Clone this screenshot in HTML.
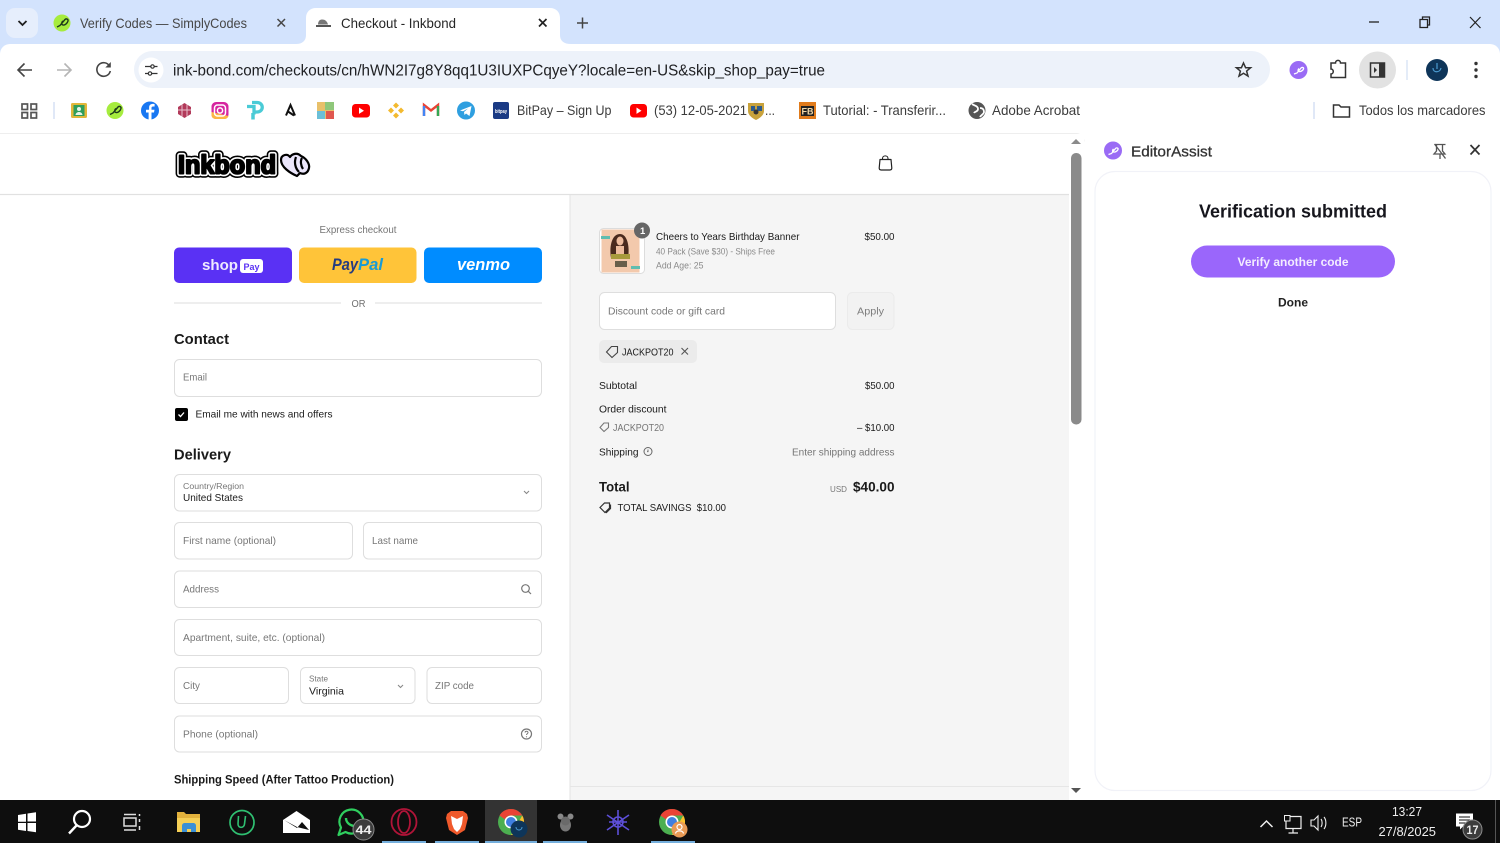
<!DOCTYPE html>
<html lang="en"><head><meta charset="utf-8"><title>Checkout - Inkbond</title>
<style>
html,body{margin:0;padding:0;background:#fff;width:1500px;height:843px;overflow:hidden}
svg{display:block;filter:blur(.3px)}
text{font-family:"Liberation Sans",sans-serif;white-space:pre}
.ph{fill:#777;font-size:10.5px}
.dk{fill:#1a1a1a;font-size:10.5px}
.gr{fill:#757575;font-size:10.5px}
.inp{fill:#fff;stroke:#dedede;stroke-width:1}
</style></head><body>
<svg width="1500" height="843" viewBox="0 0 1500 843" xmlns="http://www.w3.org/2000/svg">
<!-- chrome frame -->
<rect width="1500" height="843" fill="#d3e3fd"/>
<rect x="0" y="44" width="1500" height="120" rx="10" fill="#fff"/>
<rect x="0" y="133" width="1500" height="670" fill="#fff"/>
<!-- tab switcher -->
<rect x="6" y="8" width="32" height="30" rx="9" fill="#e6eefc"/>
<path d="M18.5 21l4 4 4-4" fill="none" stroke="#1f1f1f" stroke-width="1.800"/>
<!-- tab 1 -->
<circle cx="62" cy="23" r="8.500" fill="#a6ec3e"/>
<path d="M57 27l3-1.500 5-6c1-1.200 3.500-.5 3 1.500s-3 4.500-5 4-1.500-3 0-4" fill="none" stroke="#1d3a1a" stroke-width="1.400"/>
<text x="80" y="28" font-size="14" fill="#474747" textLength="167" lengthAdjust="spacingAndGlyphs">Verify Codes — SimplyCodes</text>
<path d="M277.500 19l7.500 7.500M285 19l-7.500 7.500" stroke="#474747" stroke-width="1.500"/>
<!-- active tab -->
<path d="M296 44c6 0 10-3 10-9V18c0-6 4-10 10-10h234c6 0 10 4 10 10v17c0 6 4 9 11 9z" fill="#fff"/>
<path d="M316 27h15v-2h-15z" fill="#555"/><path d="M318 24.500c0-3 1.500-5 4-5 3 0 5 1.500 6 5z" fill="#777"/>
<text x="341" y="28" font-size="14" fill="#262626" textLength="115" lengthAdjust="spacingAndGlyphs">Checkout - Inkbond</text>
<path d="M539 19l7.500 7.500M546.500 19l-7.500 7.500" stroke="#222" stroke-width="1.700"/>
<path d="M582.500 17.500v11M577 23h11" stroke="#444" stroke-width="1.500"/>
<!-- window controls -->
<path d="M1369 22h10" stroke="#222" stroke-width="1.300"/>
<path d="M1420 19.500h7.500v8h-7.500z M1422.500 19.500v-2.500h7v8h-2" fill="none" stroke="#222" stroke-width="1.300"/>
<path d="M1470 17l10.500 11M1480.500 17L1470 28" stroke="#222" stroke-width="1.200"/>
<!-- toolbar -->
<path d="M32 70H18M24.500 63.500l-6.500 6.500 6.500 6.500" fill="none" stroke="#454545" stroke-width="1.600"/>
<path d="M57 70h14M64.500 63.500l6.500 6.500-6.500 6.500" fill="none" stroke="#b5b5b5" stroke-width="1.600"/>
<path d="M109.500 66a6.800 6.800 0 1 0 .8 5" fill="none" stroke="#454545" stroke-width="1.600"/><path d="M110.800 62v5.500h-5.500z" fill="#454545"/>
<rect x="134" y="51" width="1136" height="37" rx="18.500" fill="#edf2fa"/>
<circle cx="151" cy="70" r="12.500" fill="#fff"/>
<path d="M145 66.500h6M154.500 66.500h3M145 73.500h3M151.500 73.500h6" stroke="#333" stroke-width="1.300"/>
<circle cx="152.500" cy="66.500" r="1.700" fill="none" stroke="#333" stroke-width="1.200"/><circle cx="150" cy="73.500" r="1.700" fill="none" stroke="#333" stroke-width="1.200"/>
<text x="173" y="75.500" font-size="15.500" fill="#202124" textLength="652" lengthAdjust="spacingAndGlyphs">ink-bond.com/checkouts/cn/hWN2I7g8Y8qq1U3IUXPCqyeY?locale=en-US&amp;skip_shop_pay=true</text>
<path d="M1243.500 63l2.100 4.700h5l-4 3.400 1.400 5-4.500-2.800-4.500 2.800 1.400-5-4-3.400h5z" fill="none" stroke="#333" stroke-width="1.500"/>
<circle cx="1298.500" cy="70" r="9" fill="#9a6bf5"/>
<path d="M1294 74l3-1 4-5c1-1.200 3-.5 2.500 1s-3 3-4.500 2.500-1-2 0-3" fill="none" stroke="#fff" stroke-width="1.300"/>
<path d="M1331 63h4.500c0-3.500 5-3.500 5 0h5v14.500h-14.500v-3.500c3 0 3-5 0-5z" fill="none" stroke="#333" stroke-width="1.500"/>
<circle cx="1377.500" cy="70" r="18.500" fill="#e2e2e2"/>
<rect x="1370.500" y="63" width="14" height="14" fill="none" stroke="#333" stroke-width="1.500"/><rect x="1379" y="63" width="5.500" height="14" fill="#333"/><path d="M1374 67l3 3-3 3z" fill="#333"/>
<path d="M1407 60v20" stroke="#dbe5f5" stroke-width="1.500"/>
<circle cx="1437" cy="70" r="11" fill="#0e3559"/><path d="M1433 68c0 5 7 5 8 0M1437 63v6" fill="none" stroke="#4a9ad0" stroke-width="1.200"/>
<circle cx="1476" cy="63.500" r="1.700" fill="#333"/><circle cx="1476" cy="70" r="1.700" fill="#333"/><circle cx="1476" cy="76.500" r="1.700" fill="#333"/>
<!-- bookmarks -->
<g fill="none" stroke="#555" stroke-width="1.700"><rect x="22" y="104" width="5.500" height="5.500"/><rect x="31" y="104" width="5.500" height="5.500"/><rect x="22" y="112.500" width="5.500" height="5.500"/><rect x="31" y="112.500" width="5.500" height="5.500"/></g>
<path d="M54 102v17" stroke="#d5e1f4" stroke-width="1.500"/>
<rect x="71" y="103" width="16" height="15" rx="1.500" fill="#e2b73a"/><rect x="73.500" y="105" width="11" height="11" fill="#2f9e5b"/><circle cx="79" cy="109" r="2" fill="#e6f4e6"/><path d="M75.500 115c.5-4 6.500-4 7 0z" fill="#e6f4e6"/>
<circle cx="115" cy="110.500" r="8.500" fill="#a6ec3e"/><path d="M110 114.500l3-1.500 5-6c1-1.200 3.500-.5 3 1.500s-3 4.500-5 4-1.500-3 0-4" fill="none" stroke="#1d3a1a" stroke-width="1.400"/>
<circle cx="150" cy="110.500" r="9" fill="#1877f2"/><path d="M151.500 119.500v-7h2.500l.5-2.800h-3V108c0-1 .5-1.500 1.500-1.500h1.600V104c-3.300-.5-5.500.5-5.500 3.500v2.200H146v2.800h2.600v7z" fill="#fff"/>
<path d="M178 107l6.500-4 6.500 4v7l-6.500 4-6.500-4z" fill="#b23a5a"/><path d="M182 104.500v12M187 104.500v12M178 110l13 0" stroke="#e8c0cc" stroke-width="1"/>
<rect x="211.500" y="102" width="17" height="17" rx="4.500" fill="#d6249f"/><path d="M211.500 112v3c0 2.500 2 4 4.500 4h8.500c2 0 3.500-1.500 4-3z" fill="#fdb644"/>
<rect x="214.500" y="105" width="11" height="11" rx="3" fill="none" stroke="#fff" stroke-width="1.500"/><circle cx="220" cy="110.500" r="2.600" fill="none" stroke="#fff" stroke-width="1.500"/>
<path d="M247 106.500h7v8M252 102.500h5c7 0 7 9.500 0 9.500h-3" fill="none" stroke="#4acbd6" stroke-width="3.300"/><path d="M253 113v6.500" stroke="#4acbd6" stroke-width="3.500"/>
<path d="M286 115.500l4.500-10.500 4.500 10.500M288 111.500l6 4" fill="none" stroke="#111" stroke-width="2"/>
<rect x="317" y="102" width="17" height="17" fill="#e8c06a"/><rect x="317" y="111" width="8" height="8" fill="#6bbfd8"/><rect x="326" y="111" width="8" height="8" fill="#e0574f"/><rect x="325" y="102" width="9" height="8" fill="#8fc77a"/>
<rect x="352" y="104" width="18" height="13.500" rx="3.500" fill="#f00"/><path d="M359 107.500l5 3.200-5 3.200z" fill="#fff"/>
<g fill="#f3ba2f"><path d="M396 102.500l3 3-3 3-3-3z"/><path d="M396 112.500l3 3-3 3-3-3z"/><path d="M391 107.500l3 3-3 3-3-3z"/><path d="M401 107.500l3 3-3 3-3-3z"/></g>
<path d="M424 116v-11l7 5.500 7-5.500v11" fill="none" stroke="#ea4335" stroke-width="2.400"/><path d="M424 116v-10" stroke="#4285f4" stroke-width="2.400"/><path d="M438 116v-10" stroke="#34a853" stroke-width="2.400"/>
<circle cx="466" cy="110.500" r="9" fill="#2f9fe0"/><path d="M460 110.500l11.500-4.500-2 10-3.500-2.500-1.500 1.500-.5-3 4-3.500-5 2.800z" fill="#fff"/>
<rect x="493" y="102" width="16" height="17" rx="2" fill="#1a3a84"/><text x="495" y="113" font-size="5" fill="#fff" font-weight="bold" textLength="12" lengthAdjust="spacingAndGlyphs">bitpay</text>
<text x="517" y="115" font-size="14" fill="#3c3c3c" textLength="94.500" lengthAdjust="spacingAndGlyphs">BitPay – Sign Up</text>
<rect x="630" y="104" width="17" height="13.500" rx="3.500" fill="#f00"/><path d="M636.500 107.500l5 3.200-5 3.200z" fill="#fff"/>
<text x="654" y="115" font-size="14" fill="#3c3c3c" textLength="93" lengthAdjust="spacingAndGlyphs">(53) 12-05-2021</text>
<path d="M748 103h16v8c0 4-4 7-8 9-4-2-8-5-8-9z" fill="#c8a23c"/><path d="M751 106h4v5h-4zM757 106h5v5h-5z" fill="#2c5a8c"/><circle cx="756" cy="112" r="2.500" fill="#333"/>
<text x="765" y="115" font-size="14" fill="#3c3c3c" textLength="10" lengthAdjust="spacingAndGlyphs">...</text>
<rect x="799" y="102" width="17" height="17" fill="#e07b1c"/><rect x="801" y="106" width="13" height="10" fill="#222"/><text x="801.500" y="114.500" font-size="9" font-weight="bold" fill="#f4d9a8" textLength="12" lengthAdjust="spacingAndGlyphs">FB</text>
<text x="823" y="115" font-size="14" fill="#3c3c3c" textLength="123" lengthAdjust="spacingAndGlyphs">Tutorial: - Transferir...</text>
<circle cx="977" cy="110.500" r="8.500" fill="#555"/><path d="M972 104c3 2 6 2 6 5s-3 2-4 4M980 108c3 0 4 2 4 4s-3 3-4 5" fill="none" stroke="#fff" stroke-width="1.800"/>
<text x="992" y="115" font-size="14" fill="#3c3c3c" textLength="88" lengthAdjust="spacingAndGlyphs">Adobe Acrobat</text>
<path d="M1314 102v17" stroke="#d5e1f4" stroke-width="1.500"/>
<path d="M1333.500 105h5.500l2 2h8.500v10h-16z" fill="none" stroke="#333" stroke-width="1.500"/>
<text x="1359" y="115" font-size="14" fill="#3c3c3c" textLength="126.500" lengthAdjust="spacingAndGlyphs">Todos los marcadores</text>

<!-- page content -->
<rect x="570" y="194" width="499" height="606" fill="#f5f5f5"/>
<path d="M570 194v606" stroke="#e3e3e3"/>
<path d="M0 194.500h1069" stroke="#e1e1e1" stroke-width="1.200"/>
<path d="M570 786.500h499" stroke="#e6e6e6"/>
<path d="M0 133.500h1076a8 8 0 0 1 8 8" fill="none" stroke="#eee"/>
<!-- logo -->
<g font-weight="bold" font-size="26">
<text x="178" y="173.500" textLength="98" lengthAdjust="spacingAndGlyphs" fill="#000" stroke="#000" stroke-width="8.500" stroke-linejoin="round" stroke-linecap="round">Inkbond</text>
<text x="178" y="173.500" textLength="98" lengthAdjust="spacingAndGlyphs" fill="#fff" stroke="#fff" stroke-width="5.200" stroke-linejoin="round" stroke-linecap="round">Inkbond</text>
<text x="178" y="173.500" textLength="98" lengthAdjust="spacingAndGlyphs" fill="#000" stroke="#000" stroke-width="2" stroke-linejoin="round">Inkbond</text>
</g>
<path d="M281 160c0-5 6-7 9-3 2-3 7-5 11-1 5 2 9 8 8 12-1 5-5 7-9 5l-3 3c-7-3-16-9-16-16z" fill="#ebe6fb" stroke="#000" stroke-width="2.200" stroke-linejoin="round"/>
<path d="M296 157c-2 5-1 11 3 15M302 158c-2 3-1 8 1 11" fill="none" stroke="#000" stroke-width="2.200"/>
<!-- bag -->
<path d="M880 159.500h11l.8 8.500c0 1.500-.8 2-2 2h-8.600c-1.200 0-2-.5-2-2z" fill="none" stroke="#222" stroke-width="1.200" stroke-linejoin="round"/><path d="M882.500 159.500v-1c0-3.500 5.500-3.500 5.500 0v1" fill="none" stroke="#222" stroke-width="1.100"/>

<!-- express -->
<text x="319.500" y="233" class="gr" font-size="10.500" textLength="77" lengthAdjust="spacingAndGlyphs">Express checkout</text>
<rect x="174" y="247.500" width="118" height="35.500" rx="5" fill="#5a31f4"/>
<text x="202" y="270" font-size="15" font-weight="bold" fill="#efeaff" textLength="36" lengthAdjust="spacingAndGlyphs">shop</text>
<rect x="240" y="259" width="23" height="14" rx="3" fill="#fff"/><text x="243.500" y="270" font-size="9.500" font-weight="bold" fill="#5a31f4" textLength="16" lengthAdjust="spacingAndGlyphs">Pay</text>
<rect x="299" y="247.500" width="117.500" height="35.500" rx="5" fill="#ffc439"/>
<text x="332" y="270" font-size="16.500" font-weight="bold" font-style="italic" fill="#253b80" textLength="26" lengthAdjust="spacingAndGlyphs">Pay</text>
<text x="358" y="270" font-size="16.500" font-weight="bold" font-style="italic" fill="#179bd7" textLength="25" lengthAdjust="spacingAndGlyphs">Pal</text>
<rect x="424" y="247.500" width="118" height="35.500" rx="5" fill="#008cff"/>
<text x="457" y="270" font-size="16.500" font-weight="bold" font-style="italic" fill="#fff" textLength="53" lengthAdjust="spacingAndGlyphs">venmo</text>
<path d="M174 303h167M375 303h167" stroke="#e3e3e3" stroke-width="1.300"/>
<text x="351.500" y="307" font-size="10.500" fill="#707070" textLength="14" lengthAdjust="spacingAndGlyphs">OR</text>

<!-- contact -->
<text x="174" y="344" font-size="15" font-weight="bold" fill="#1a1a1a" textLength="55" lengthAdjust="spacingAndGlyphs">Contact</text>
<rect class="inp" x="174.500" y="359.500" width="367" height="37" rx="5"/>
<text x="183" y="380.500" class="ph" textLength="24" lengthAdjust="spacingAndGlyphs">Email</text>
<rect x="175" y="408" width="13" height="13" rx="2" fill="#000"/><path d="M178.500 414.500l2 2 3.500-4" fill="none" stroke="#fff" stroke-width="1.300"/>
<text x="195.500" y="417.500" class="dk" textLength="137" lengthAdjust="spacingAndGlyphs">Email me with news and offers</text>

<!-- delivery -->
<text x="174" y="459.500" font-size="15" font-weight="bold" fill="#1a1a1a" textLength="57" lengthAdjust="spacingAndGlyphs">Delivery</text>
<rect class="inp" x="174.500" y="474.500" width="367" height="36.500" rx="5"/>
<text x="183" y="489" font-size="8.500" fill="#777" textLength="61" lengthAdjust="spacingAndGlyphs">Country/Region</text>
<text x="183" y="501" class="dk" textLength="60" lengthAdjust="spacingAndGlyphs">United States</text>
<path d="M524 491l2.500 2.500 2.500-2.500" fill="none" stroke="#888" stroke-width="1.100"/>
<rect class="inp" x="174.500" y="522.500" width="178" height="36.500" rx="5"/>
<text x="183" y="544" class="ph" textLength="93" lengthAdjust="spacingAndGlyphs">First name (optional)</text>
<rect class="inp" x="363.500" y="522.500" width="178" height="36.500" rx="5"/>
<text x="372" y="544" class="ph" textLength="46" lengthAdjust="spacingAndGlyphs">Last name</text>
<rect class="inp" x="174.500" y="571" width="367" height="36.500" rx="5"/>
<text x="183" y="592.500" class="ph" textLength="36" lengthAdjust="spacingAndGlyphs">Address</text>
<circle cx="525.500" cy="588.500" r="3.800" fill="none" stroke="#777" stroke-width="1.200"/><path d="M528.300 591.300l2.700 2.700" stroke="#777" stroke-width="1.200"/>
<rect class="inp" x="174.500" y="619.500" width="367" height="36" rx="5"/>
<text x="183" y="641" class="ph" textLength="142" lengthAdjust="spacingAndGlyphs">Apartment, suite, etc. (optional)</text>
<rect class="inp" x="174.500" y="667.500" width="114" height="36" rx="5"/>
<text x="183" y="689" class="ph" textLength="17" lengthAdjust="spacingAndGlyphs">City</text>
<rect class="inp" x="300.500" y="667.500" width="114.500" height="36" rx="5"/>
<text x="309" y="681.500" font-size="8.500" fill="#777" textLength="19" lengthAdjust="spacingAndGlyphs">State</text>
<text x="309" y="694.500" class="dk" textLength="35" lengthAdjust="spacingAndGlyphs">Virginia</text>
<path d="M398 685l2.500 2.500 2.500-2.500" fill="none" stroke="#888" stroke-width="1.100"/>
<rect class="inp" x="427" y="667.500" width="114.500" height="36" rx="5"/>
<text x="435" y="689" class="ph" textLength="39" lengthAdjust="spacingAndGlyphs">ZIP code</text>
<rect class="inp" x="174.500" y="716" width="367" height="36" rx="5"/>
<text x="183" y="737.500" class="ph" textLength="75" lengthAdjust="spacingAndGlyphs">Phone (optional)</text>
<circle cx="526.500" cy="734" r="5" fill="none" stroke="#777" stroke-width="1.200"/><path d="M525 732.500c.3-1.800 3.200-1.500 3 .2-.1 1-1.500 1.200-1.500 2.300" fill="none" stroke="#777" stroke-width="1"/><circle cx="526.500" cy="736.800" r=".6" fill="#777"/>
<text x="174" y="783.500" font-size="12" font-weight="bold" fill="#1a1a1a" textLength="220" lengthAdjust="spacingAndGlyphs">Shipping Speed (After Tattoo Production)</text>

<!-- summary -->
<rect x="599.500" y="228.500" width="45" height="45" rx="4" fill="#fff" stroke="#dcdcdc"/>
<rect x="601.500" y="229.500" width="38" height="43" fill="#f3c9ac"/>
<path d="M611 258c-2-12 1-24 9-24 7 0 10 12 8 24z" fill="#4a2a1e"/>
<ellipse cx="620" cy="241" rx="3.500" ry="4.500" fill="#eebc9e"/><rect x="616" y="246" width="8" height="8" fill="#eebc9e"/>
<rect x="611" y="254" width="19" height="5" fill="#a89a3c"/><rect x="615" y="261" width="12" height="6" fill="#3a3a2a" opacity=".75"/>
<rect x="601" y="236" width="9" height="3" fill="#5fbdb0"/><rect x="631" y="266" width="9" height="3" fill="#5fbdb0"/>
<circle cx="642" cy="230.500" r="8" fill="#666"/><text x="640" y="234" font-size="9.500" font-weight="bold" fill="#fff">1</text>
<text x="656" y="240" class="dk" textLength="143.500" lengthAdjust="spacingAndGlyphs">Cheers to Years Birthday Banner</text>
<text x="656" y="254.500" font-size="9" fill="#8a8a8a" textLength="119" lengthAdjust="spacingAndGlyphs">40 Pack (Save $30) - Ships Free</text>
<text x="656" y="268.500" font-size="9" fill="#8a8a8a" textLength="47.500" lengthAdjust="spacingAndGlyphs">Add Age: 25</text>
<text x="864.500" y="240" class="dk" textLength="30" lengthAdjust="spacingAndGlyphs">$50.00</text>
<rect x="599.500" y="292.500" width="236" height="37" rx="5" fill="#fff" stroke="#dedede"/>
<text x="608" y="314.500" class="ph" textLength="117" lengthAdjust="spacingAndGlyphs">Discount code or gift card</text>
<rect x="847.500" y="292.500" width="46.500" height="37" rx="5" fill="#f2f2f2" stroke="#ebebeb"/>
<text x="857" y="314.500" font-size="10.500" fill="#7d7d7d" textLength="27" lengthAdjust="spacingAndGlyphs">Apply</text>
<rect x="599" y="340" width="98" height="23" rx="5" fill="#ebebeb"/>
<path d="M606.500 352l5-5.500h6v6l-5.500 5z" fill="none" stroke="#444" stroke-width="1.100"/>
<text x="622" y="355.500" class="dk" textLength="51.500" lengthAdjust="spacingAndGlyphs">JACKPOT20</text>
<path d="M681.500 348l6.500 6.500M688 348l-6.500 6.500" stroke="#555" stroke-width="1.100"/>
<text x="599" y="389" class="dk" textLength="38" lengthAdjust="spacingAndGlyphs">Subtotal</text>
<text x="865" y="389" class="dk" textLength="29.500" lengthAdjust="spacingAndGlyphs">$50.00</text>
<text x="599" y="412.500" class="dk" textLength="67.500" lengthAdjust="spacingAndGlyphs">Order discount</text>
<path d="M600 427.500l4-4.500h4.500v4.500l-4.500 4z" fill="none" stroke="#777" stroke-width="1.100"/>
<text x="613" y="431" class="gr" textLength="51" lengthAdjust="spacingAndGlyphs">JACKPOT20</text>
<text x="857" y="431" class="dk" textLength="37.500" lengthAdjust="spacingAndGlyphs">– $10.00</text>
<text x="599" y="455.500" class="dk" textLength="39.500" lengthAdjust="spacingAndGlyphs">Shipping</text>
<circle cx="648" cy="451.500" r="4" fill="none" stroke="#666" stroke-width="1"/><path d="M648 449.500v2.200h-1" fill="none" stroke="#666" stroke-width=".9"/>
<text x="792" y="455.500" class="gr" textLength="102.500" lengthAdjust="spacingAndGlyphs">Enter shipping address</text>
<text x="599" y="491.500" font-size="14" font-weight="bold" fill="#1a1a1a" textLength="30.500" lengthAdjust="spacingAndGlyphs">Total</text>
<text x="830" y="492" font-size="8.500" fill="#777" textLength="17" lengthAdjust="spacingAndGlyphs">USD</text>
<text x="853" y="491.500" font-size="14" font-weight="bold" fill="#1a1a1a" textLength="41.500" lengthAdjust="spacingAndGlyphs">$40.00</text>
<path d="M600 507.500l4.500-4.500h5v5l-4.500 4.500zM610.500 504.500v4l-4.500 4.500" fill="none" stroke="#333" stroke-width="1.200"/>
<text x="617.500" y="511" class="dk" textLength="108.500" lengthAdjust="spacingAndGlyphs">TOTAL SAVINGS  $10.00</text>

<!-- scrollbar -->
<rect x="1069" y="134" width="15" height="666" fill="#fff"/>
<path d="M1076 139l5 5h-10z" fill="#8a8a8a"/>
<rect x="1071" y="153" width="10.500" height="271.500" rx="5" fill="#8a8a8a"/>
<path d="M1076 793l5-5h-10z" fill="#555"/>

<!-- side panel -->
<circle cx="1113" cy="150.500" r="9" fill="#9a6bf5"/><path d="M1108.500 154.500l3-1 4-5c1-1.200 3-.5 2.500 1s-3 3-4.500 2.500-1-2 0-3" fill="none" stroke="#fff" stroke-width="1.300"/>
<text x="1131" y="156.500" font-size="15" fill="#333" stroke="#333" stroke-width=".3" textLength="81" lengthAdjust="spacingAndGlyphs">EditorAssist</text>
<path d="M1434.500 144.500h11M1436.500 145v6l-2.500 3h11l-2.500-3v-6M1440 154v5M1434.500 144l11 14.500" fill="none" stroke="#555" stroke-width="1.300"/>
<path d="M1470.500 145l9 9.500M1479.500 145l-9 9.500" stroke="#333" stroke-width="1.700"/>
<rect x="1095" y="171.500" width="396" height="619" rx="20" fill="#fff" stroke="#f1f2f8" stroke-width="1.200"/>
<text x="1199" y="217.500" font-size="18" font-weight="bold" fill="#16161d" textLength="188" lengthAdjust="spacingAndGlyphs">Verification submitted</text>
<rect x="1191" y="245.500" width="204" height="32" rx="16" fill="#9a66fb"/>
<text x="1237.500" y="266" font-size="12" font-weight="bold" fill="#f3edff" textLength="111" lengthAdjust="spacingAndGlyphs">Verify another code</text>
<text x="1278" y="306.500" font-size="12" font-weight="bold" fill="#222" textLength="30" lengthAdjust="spacingAndGlyphs">Done</text>

<!-- taskbar -->
<rect x="0" y="800" width="1500" height="43" fill="#0e0e0e"/>
<rect x="485" y="800" width="52" height="43" fill="#333"/>
<g fill="#74aedc"><rect x="382" y="841" width="44" height="2"/><rect x="435" y="841" width="44" height="2"/><rect x="485" y="841" width="52" height="2"/><rect x="543" y="841" width="44" height="2"/><rect x="651" y="841" width="44" height="2"/></g>
<path d="M18 815l8-1.200v8h-8zM27.500 813.500l8.500-1.300v9.300h-8.500zM18 823h8v8l-8-1.200zM27.500 823h8.500v9.300l-8.500-1.300z" fill="#fff"/>
<circle cx="82" cy="819" r="8" fill="none" stroke="#fff" stroke-width="2.200"/><path d="M76.500 825.500l-7.500 8" stroke="#fff" stroke-width="2.400"/>
<g fill="none" stroke="#ddd" stroke-width="1.500"><rect x="124" y="818" width="12" height="8"/><path d="M124 814.500h12M124 830h12M139.500 814v2M139.500 819v3M139.500 826v4"/></g>
<path d="M177 819v-7h7l2 2h14v5z" fill="#e2b13c"/><path d="M177 818h23v14h-23z" fill="#f5cf56"/><path d="M182 832v-6c0-2 1-3 3-3h8c2 0 3 1 3 3v6h-5v-3h-4v3z" fill="#3a8fd6"/>
<circle cx="242" cy="822.500" r="12" fill="none" stroke="#2fbf71" stroke-width="1.700"/>
<path d="M238.500 816l-.5 8c0 4.500 6 4.500 6.500 0l1-8" fill="none" stroke="#2fbf71" stroke-width="1.600"/>
<path d="M283 820l13.500-9 13.500 9v13h-27z" fill="#fff"/><path d="M284 820l13 8 5-6 7 8-12-3-13-7z" fill="#0e0e0e"/>
<path d="M338.500 835l2.500-7.500a12 12 0 1 1 4.500 4.500z" fill="none" stroke="#2fcf5f" stroke-width="2.200" stroke-linejoin="round"/>
<path d="M346 818c0 4 3 7 8 8" fill="none" stroke="#2fcf5f" stroke-width="2.400"/>
<circle cx="363.500" cy="829.500" r="10.500" fill="#3c3c3c" stroke="#8a8a8a"/>
<text x="355.500" y="834" font-size="12" font-weight="bold" fill="#eee" textLength="16" lengthAdjust="spacingAndGlyphs">44</text>
<ellipse cx="404" cy="822" rx="12.500" ry="13" fill="none" stroke="#b01438" stroke-width="1.800"/><ellipse cx="404" cy="822" rx="6" ry="11" fill="none" stroke="#b01438" stroke-width="1.800"/>
<path d="M447 814l4-3h12l4 3 1 4-3 12-8 5-8-5-3-12z" fill="#f0592b"/><path d="M451 816l6 3 6-3-1 8-2 5-3 3-3-3-2-5z" fill="#fff"/>
<circle cx="511" cy="822" r="13" fill="#4caf50"/><path d="M511 809a13 13 0 0 1 11.300 6.500H511a6.500 6.500 0 0 0-6 4l-5.500-4a13 13 0 0 1 11.500-6.500z" fill="#ea4335"/><path d="M522.300 815.500a13 13 0 0 1-11.300 19.500l5.500-9.500z" fill="#fbc02d"/><circle cx="511" cy="822" r="6.500" fill="#fff"/><circle cx="511" cy="822" r="5" fill="#3f7fe0"/>
<circle cx="519" cy="829" r="8.500" fill="#0e3559"/><path d="M516 827c0 4 6 4 6 0" fill="none" stroke="#4a9ad0"/>
<ellipse cx="565.500" cy="825" rx="5.500" ry="6.500" fill="#777"/><circle cx="560.500" cy="816.500" r="3" fill="#888"/><circle cx="570.500" cy="816.500" r="3" fill="#888"/><circle cx="565.500" cy="821" r="4.500" fill="#6a6a6a"/>
<g fill="none" stroke="#5d4fd8" stroke-width="1.600"><path d="M618 810v25M607 815l22 15M629 815l-22 15M609 822h18"/><circle cx="618" cy="822" r="5"/></g>
<circle cx="672" cy="822" r="13" fill="#4caf50"/><path d="M672 809a13 13 0 0 1 11.300 6.500H672a6.500 6.500 0 0 0-6 4l-5.500-4a13 13 0 0 1 11.500-6.500z" fill="#ea4335"/><path d="M683.300 815.500a13 13 0 0 1-11.300 19.500l5.500-9.500z" fill="#fbc02d"/><circle cx="672" cy="822" r="6.500" fill="#fff"/><circle cx="672" cy="822" r="5" fill="#3f7fe0"/>
<circle cx="679.500" cy="829.500" r="8" fill="#e89a55"/><circle cx="679.500" cy="827" r="2.500" fill="none" stroke="#fff" stroke-width="1.200"/><path d="M675.500 833.500c.5-3.500 7.500-3.500 8 0" fill="none" stroke="#fff" stroke-width="1.200"/>
<!-- tray -->
<path d="M1260.500 827l6-6 6 6" fill="none" stroke="#eee" stroke-width="1.500"/>
<path d="M1286 816.500h15v12h-15zM1293 828.500v4M1288.500 833h9.500" fill="none" stroke="#eee" stroke-width="1.200"/><rect x="1284.500" y="815.500" width="5.500" height="5.500" fill="#0e0e0e" stroke="#eee"/>
<path d="M1311 820h3l4-4v14l-4-4h-3zM1321 819c1.500 2 1.500 6 0 8M1324 817c2.500 3 2.500 9 0 12" fill="none" stroke="#eee" stroke-width="1.100"/>
<text x="1342" y="826.500" font-size="13" fill="#eee" textLength="20" lengthAdjust="spacingAndGlyphs">ESP</text>
<text x="1392" y="816" font-size="13" fill="#eee" textLength="30" lengthAdjust="spacingAndGlyphs">13:27</text>
<text x="1378.500" y="836" font-size="13" fill="#eee" textLength="57.500" lengthAdjust="spacingAndGlyphs">27/8/2025</text>
<path d="M1456 813.500h17v13h-10l-3 3v-3h-4z" fill="#fff"/><path d="M1459 817h11M1459 820h11M1459 823h7" stroke="#0e0e0e"/>
<circle cx="1472.500" cy="829.500" r="9.500" fill="#3c3c3c" stroke="#8a8a8a"/>
<text x="1466.500" y="834" font-size="12" font-weight="bold" fill="#eee" textLength="12" lengthAdjust="spacingAndGlyphs">17</text>
<path d="M1495.500 800v43" stroke="#555"/>
</svg>
</body></html>
